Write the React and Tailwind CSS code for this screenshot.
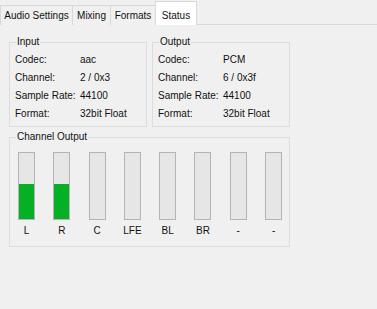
import React from 'react';

const Group = ({ title, className = '', children }) => (
  <fieldset className={`border border-[#dcdcdc] ${className}`}>
    <legend className="ml-[6px] px-[1px] leading-[12px]">{title}</legend>
    {children}
  </fieldset>
);

const InfoGroup = ({ title, rows }) => (
  <Group title={title} className="w-[138px] pt-[2px] pb-[4px]">
    <div className="pl-[5px]">
      {rows.map(([k, v]) => (
        <div key={k} className="flex h-[18px] items-center">
          <span className="w-[65px] shrink-0">{k}</span>
          <span>{v}</span>
        </div>
      ))}
    </div>
  </Group>
);

const App = () => {
  const tabs = [
    { name: 'Audio Settings', w: 'w-[72px]' },
    { name: 'Mixing', w: 'w-[38px]' },
    { name: 'Formats', w: 'w-[45px]' },
  ];
  const channels = [
    { name: 'L', level: 35 },
    { name: 'R', level: 35 },
    { name: 'C', level: 0 },
    { name: 'LFE', level: 0 },
    { name: 'BL', level: 0 },
    { name: 'BR', level: 0 },
    { name: '-', level: 0 },
    { name: '-', level: 0 },
  ];

  return (
    <div className="w-[377px] h-[309px] bg-[#f0f0f0] text-[10px] text-[#111] font-['Liberation_Sans',Arial,sans-serif] overflow-hidden">
      {/* Tabs */}
      <div className="flex h-[25px] items-end border-b border-[#d9d9d9]">
        {tabs.map((t) => (
          <div
            key={t.name}
            className={`${t.w} h-[20px] -mb-px flex items-center justify-center border border-r-0 border-b-0 border-[#d9d9d9] bg-[#f0f0f0]`}
          >
            {t.name}
          </div>
        ))}
        <div className="w-[42px] h-[24px] -mb-px flex items-start pt-[6px] justify-center border border-b-0 border-[#d9d9d9] bg-white">
          Status
        </div>
      </div>

      {/* Content */}
      <div className="pl-[9px] pt-[11px]">
        <div className="flex gap-[5px]">
          <InfoGroup
            title="Input"
            rows={[
              ['Codec:', 'aac'],
              ['Channel:', '2 / 0x3'],
              ['Sample Rate:', '44100'],
              ['Format:', '32bit Float'],
            ]}
          />
          <InfoGroup
            title="Output"
            rows={[
              ['Codec:', 'PCM'],
              ['Channel:', '6 / 0x3f'],
              ['Sample Rate:', '44100'],
              ['Format:', '32bit Float'],
            ]}
          />
        </div>

        <Group title="Channel Output" className="mt-[4px] w-[281px] pt-[9px] pb-[9px]">
          <div className="flex gap-[18.3px] pl-[8px]">
            {channels.map((c, i) => (
              <div key={i} className="flex w-[17px] flex-col items-center">
                <div className="flex h-[68px] w-[17px] flex-col justify-end border border-[#b4b4b4] bg-[#e6e6e6]">
                  {c.level > 0 && (
                    <div className="w-full bg-[#06b025]" style={{ height: `${c.level}px` }} />
                  )}
                </div>
                <span className="mt-[5px] leading-[12px] whitespace-nowrap">{c.name}</span>
              </div>
            ))}
          </div>
        </Group>
      </div>
    </div>
  );
};

export default App;
